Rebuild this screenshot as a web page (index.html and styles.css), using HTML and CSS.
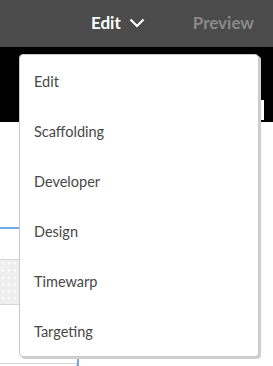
FILE: index.html
```html
<!DOCTYPE html>
<html lang="en">
<head>
<meta charset="UTF-8">
<meta name="viewport" content="width=device-width">
<title>Mode menu</title>
<link rel="stylesheet" href="styles.css">
</head>
<body>
<div class="bar">
    <button class="mode">Edit
        <svg class="chev" width="16" height="10" viewBox="0 0 16 10"><path d="M1.5 1.5 8 8 14.5 1.5" fill="none" stroke="#fff" stroke-width="2.2"/></svg>
    </button>
    <button class="prev">Preview</button>
</div>
<div class="band"><div class="tick"></div></div>
<div class="canvas">
    <div class="blue-h"></div>
    <div class="dots"></div>
    <div class="box"></div>
    <div class="blue-v"></div>
</div>
<ul class="menu">
    <li>Edit</li>
    <li>Scaffolding</li>
    <li>Developer</li>
    <li>Design</li>
    <li>Timewarp</li>
    <li>Targeting</li>
</ul>
</body>
</html>
```
FILE: styles.css
```css
*{margin:0;padding:0;box-sizing:border-box}
body{width:273px;height:366px;overflow:hidden;background:#fff;font-family:Lato,'Noto Sans',sans-serif;position:relative}

/* Top bar */
.bar{height:47px;background:#4b4b4b;display:flex;justify-content:flex-end;align-items:center;padding:0 19px 0 0;gap:48px}
button{background:none;border:0;font-family:inherit;font-weight:700;font-size:17px;cursor:pointer;display:flex;align-items:center;gap:8px;padding-bottom:2px}
.mode{color:#fff}
.chev{margin-top:1px}
.prev{color:#8a8a8a}

/* Black band */
.band{height:75px;background:#000;position:relative}
.tick{position:absolute;right:9px;top:53px;width:3px;height:20px;background:#fff}

/* Canvas behind the menu */
.canvas{position:relative;height:244px}
.blue-h{position:absolute;left:0;top:105px;width:60px;height:2px;background:#72a8ee}
.dots{position:absolute;left:0;top:137px;width:60px;height:46px;background-color:#efefef;background-image:radial-gradient(#fff 0.8px,transparent 1.2px);background-size:6px 7px;border-top:1px solid #d6d6d6;border-bottom:1px solid #d6d6d6}
.box{position:absolute;left:0;top:241px;width:77px;height:10px;border:1px solid #d2d2d2;border-left:0}
.blue-v{position:absolute;left:77px;top:234px;width:2px;height:20px;background:#72a8ee}

/* Dropdown menu */
.menu{position:absolute;left:19px;top:54px;width:240px;height:303px;list-style:none;background:#fff;border:1px solid #c9c9c9;border-radius:4px;box-shadow:2px 2px 0 #cfcfcf;padding:1px 0}
.menu li{height:50px;display:flex;align-items:center;padding-left:14px;font-size:14.5px;color:#474747}
```
